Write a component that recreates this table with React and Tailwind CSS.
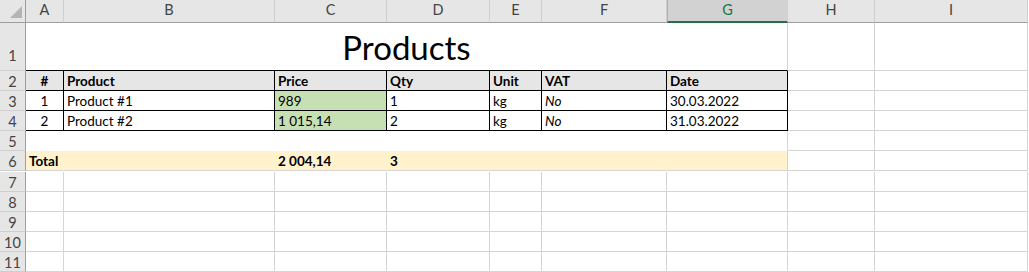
import clsx from 'clsx'

const FONT = { fontFamily: 'Lato, "Open Sans", sans-serif' }

const COLS = ['A', 'B', 'C', 'D', 'E', 'F', 'G', 'H', 'I']
const SELECTED_COL = 'G'

const PRODUCTS = [
  { n: 1, name: 'Product #1', price: '989', qty: '1', unit: 'kg', vat: 'No', date: '30.03.2022' },
  { n: 2, name: 'Product #2', price: '1 015,14', qty: '2', unit: 'kg', vat: 'No', date: '31.03.2022' },
]

const EMPTY_ROWS = [7, 8, 9, 10, 11]

function Cell({ className, children }) {
  return (
    <div
      className={clsx(
        'flex items-end h-[20px] px-[3px] border-r border-b text-[13.5px] leading-[17px] text-black whitespace-nowrap overflow-hidden',
        className
      )}
    >
      {children}
    </div>
  )
}

function RowHead({ n, className }) {
  return (
    <div
      className={clsx(
        'flex items-end justify-center h-[20px] bg-[#e6e6e6] border-r border-b border-r-[#9e9e9e] border-b-[#cfcfcf] text-[14.5px] leading-[17px] text-[#444]',
        className
      )}
    >
      {n}
    </div>
  )
}

function ColHead({ col }) {
  const active = col === SELECTED_COL
  return (
    <div
      className={clsx(
        'flex items-center justify-center h-[23px] pb-[2px] text-[14.5px] border-r border-r-[#cfcfcf]',
        active
          ? 'bg-[#d2d2d2] border-b-2 border-b-[#217346] text-[#217346] border-l border-l-[#b0b0b0]'
          : 'bg-[#e6e6e6] border-b border-b-[#9e9e9e] text-[#444]'
      )}
    >
      {col}
    </div>
  )
}

// Plain cells in H and I, outside the table
function Rest() {
  return (
    <>
      <Cell className="border-[#d4d4d4]" />
      <Cell className="border-[#d4d4d4]" />
    </>
  )
}

export default function App() {
  const tb = 'border-r-black border-b-black'
  return (
    <div
      className="w-[1029px] h-[272px] bg-white overflow-hidden grid grid-cols-[26px_38px_211px_112px_103px_52px_125px_121px_87px_153px]"
      style={FONT}
    >
      {/* corner + column letters */}
      <div className="relative h-[23px] bg-[#e6e6e6] border-r border-b border-[#9e9e9e]">
        <svg width="26" height="23" className="absolute inset-0">
          <polygon points="22,6 22,18 10,18" fill="#b4b4b4" />
        </svg>
      </div>
      {COLS.map((c) => (
        <ColHead key={c} col={c} />
      ))}

      {/* row 1: title, merged A1:G1 */}
      <RowHead n={1} className="h-[48px] pb-[6px]" />
      <div className="col-span-7 flex items-end justify-center h-[48px] pb-[6px] border-r border-b border-r-[#d4d4d4] border-b-black text-[33px] leading-[33px] text-black">
        Products
      </div>
      <div className="h-[48px] border-r border-b border-[#d4d4d4]" />
      <div className="h-[48px] border-r border-b border-[#d4d4d4]" />

      {/* row 2: table header */}
      <RowHead n={2} />
      <Cell className={clsx(tb, 'bg-[#e7e6e6] font-bold justify-center')}>#</Cell>
      <Cell className={clsx(tb, 'bg-[#e7e6e6] font-bold')}>Product</Cell>
      <Cell className={clsx(tb, 'bg-[#e7e6e6] font-bold')}>Price</Cell>
      <Cell className={clsx(tb, 'bg-[#e7e6e6] font-bold')}>Qty</Cell>
      <Cell className={clsx(tb, 'bg-[#e7e6e6] font-bold')}>Unit</Cell>
      <Cell className={clsx(tb, 'bg-[#e7e6e6] font-bold')}>VAT</Cell>
      <Cell className={clsx(tb, 'bg-[#e7e6e6] font-bold')}>Date</Cell>
      <Rest />

      {/* rows 3-4: products */}
      {PRODUCTS.map((p, i) => (
        <div key={p.n} className="contents">
          <RowHead n={i + 3} />
          <Cell className={clsx(tb, 'justify-center')}>{p.n}</Cell>
          <Cell className={tb}>{p.name}</Cell>
          <Cell className={clsx(tb, 'bg-[#c6e0b4]')}>{p.price}</Cell>
          <Cell className={tb}>{p.qty}</Cell>
          <Cell className={tb}>{p.unit}</Cell>
          <Cell className={clsx(tb, 'italic')}>{p.vat}</Cell>
          <Cell className={tb}>{p.date}</Cell>
          <Rest />
        </div>
      ))}

      {/* row 5: blank spacer */}
      <RowHead n={5} />
      {COLS.slice(0, 7).map((c) => (
        <Cell
          key={c}
          className={clsx('border-b-white', c === 'G' ? 'border-r-[#d4d4d4]' : 'border-r-white')}
        />
      ))}
      <Rest />

      {/* row 6: totals */}
      <RowHead n={6} />
      <Cell className="bg-[#fff2cc] border-r-[#fff2cc] border-b-[#d4d4d4] font-bold">Total</Cell>
      <Cell className="bg-[#fff2cc] border-r-[#fff2cc] border-b-[#d4d4d4]" />
      <Cell className="bg-[#fff2cc] border-r-[#fff2cc] border-b-[#d4d4d4] font-bold">2 004,14</Cell>
      <Cell className="bg-[#fff2cc] border-r-[#fff2cc] border-b-[#d4d4d4] font-bold">3</Cell>
      <Cell className="bg-[#fff2cc] border-r-[#fff2cc] border-b-[#d4d4d4]" />
      <Cell className="bg-[#fff2cc] border-r-[#fff2cc] border-b-[#d4d4d4]" />
      <Cell className="bg-[#fff2cc] border-r-[#d4d4d4] border-b-[#d4d4d4]" />
      <Rest />

      {/* rows 7-11: empty grid */}
      {EMPTY_ROWS.map((r) => (
        <div key={r} className="contents">
          <RowHead n={r} />
          {COLS.map((c) => (
            <Cell key={c} className="border-[#d4d4d4]" />
          ))}
        </div>
      ))}
    </div>
  )
}
